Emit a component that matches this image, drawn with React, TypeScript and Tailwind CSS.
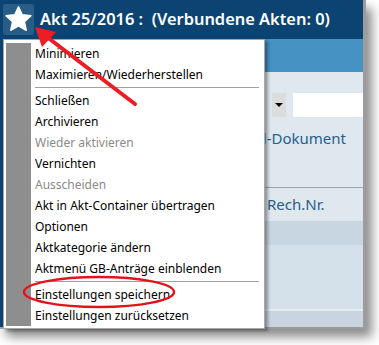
import React from "react";

const items: { label: string; disabled?: boolean; sep?: boolean }[] = [
  { label: "Minimieren" },
  { label: "Maximieren/Wiederherstellen" },
  { label: "", sep: true },
  { label: "Schließen" },
  { label: "Archivieren" },
  { label: "Wieder aktivieren", disabled: true },
  { label: "Vernichten" },
  { label: "Ausscheiden", disabled: true },
  { label: "Akt in Akt-Container übertragen" },
  { label: "Optionen" },
  { label: "Aktkategorie ändern" },
  { label: "Aktmenü GB-Anträge einblenden" },
  { label: "", sep: true },
  { label: "Einstellungen speichern" },
  { label: "Einstellungen zurücksetzen" },
];

function StarIcon() {
  return (
    <div className="w-[31px] h-[31px] rounded-[3px] bg-[#2a5d86] flex items-center justify-center">
      <svg width="29" height="29" viewBox="0 0 24 24">
        <path
          d="M12 1.5l3.1 6.6 7.2.8-5.4 4.9 1.5 7.1L12 17.3l-6.4 3.6 1.5-7.1L1.7 8.9l7.2-.8z"
          fill="#fff"
          stroke="#fff"
          strokeWidth="1.2"
          strokeLinejoin="round"
        />
      </svg>
    </div>
  );
}

function ContextMenu() {
  return (
    <div className="absolute left-[3px] top-[39px] w-[262px] bg-white border border-[#a7a7a7] p-[2px] pt-[3px] flex shadow-[3px_2px_3px_rgba(0,0,0,0.35)]">
      <div className="w-[25px] bg-[#8e8e8e] shrink-0" />
      <div className="flex-1 pl-[4px] pr-[3px]">
        {items.map((it, i) =>
          it.sep ? (
            <div key={i} className="h-[5px] flex items-center">
              <div className="h-px w-full bg-[#a0a0a0]" />
            </div>
          ) : (
            <div
              key={i}
              className={
                "h-[21px] flex items-center text-[12px] leading-none whitespace-nowrap " +
                (it.disabled ? "text-[#8a8a8a]" : "text-black")
              }
            >
              {it.label}
            </div>
          )
        )}
      </div>
    </div>
  );
}

function Annotations() {
  return (
    <svg className="absolute left-0 top-0 pointer-events-none" width="379" height="345">
      <line x1="47" y1="37" x2="135" y2="104" stroke="#ee1c25" strokeWidth="4" strokeLinecap="round" />
      <polygon points="35,27 56,32 42,47" fill="#ee1c25" />
      <ellipse cx="99" cy="292" rx="75" ry="15" fill="none" stroke="#e3131b" strokeWidth="2.5" />
    </svg>
  );
}

export default function App() {
  return (
    <div className="relative w-[379px] h-[345px] bg-white overflow-hidden font-['Noto_Sans',sans-serif]">
      <div className="w-[366px] h-[329px] flex flex-col shadow-[6px_8px_10px_rgba(0,0,0,0.45)] border-r-[3px] border-b-2 border-[#9c9c9c] bg-[#0b4472]">
        <div className="h-[39px] shrink-0 flex items-center gap-[6px] pl-[3px]">
          <StarIcon />
          <span className="text-white text-[16.4px] font-semibold whitespace-pre">
            Akt 25/2016 :  (Verbundene Akten: 0)
          </span>
        </div>
        <div className="flex-1 ml-[3px] flex flex-col bg-[#dfe7ef]">
          <div className="h-[33px] bg-[#4592c3]" />
          <div className="h-[21px]" />
          <div className="h-[24px] flex justify-end gap-[7px]">
            <div className="w-[14px] bg-[#dcdcdc] flex items-center justify-center">
              <div className="w-0 h-0 border-l-[4px] border-r-[4px] border-t-[4px] border-l-transparent border-r-transparent border-t-black" />
            </div>
            <div className="w-[70px] bg-white" />
          </div>
          <div className="h-[70px] flex items-start justify-end pt-[10px] pr-[17px]">
            <span className="text-[15px] text-[#25608f]">E-Mail-Dokument</span>
          </div>
          <div className="h-px bg-[#9aa5ad]" />
          <div className="h-[33px] flex items-center pl-[264px]">
            <span className="text-[15px] text-[#2a5f8a]">Rech.Nr.</span>
          </div>
          <div className="h-[24px] bg-[#c8d6e2]" />
          <div className="flex-1 bg-[#d4e0ea] border-b-2 border-[#e4ecf2]" />
          <div className="h-[16px] bg-[#c8d5e0]" />
        </div>
      </div>
      <ContextMenu />
      <Annotations />
    </div>
  );
}
